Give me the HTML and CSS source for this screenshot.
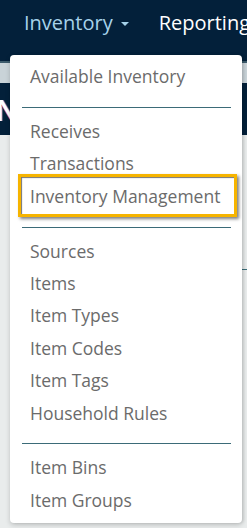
FILE: index.html
```html
<!DOCTYPE html>
<html>
<head>
<meta charset="utf-8">
<link rel="stylesheet" href="styles.css">
</head>
<body>
<header class="topnav">
  <div class="nav-item nav-active">Inventory <span class="caret"></span></div>
  <div class="nav-item">Reporting</div>
</header>
<div class="stripe"></div>
<div class="band"></div>
<div class="titlebar"><span class="logo-letter">N</span></div>
<main class="content">
  <div class="rule"></div>
</main>
<ul class="dropdown">
  <li class="dd-item">Available Inventory</li>
  <li class="dd-divider"></li>
  <li class="dd-item">Receives</li>
  <li class="dd-item">Transactions</li>
  <li class="dd-item highlighted">Inventory Management</li>
  <li class="dd-divider"></li>
  <li class="dd-item">Sources</li>
  <li class="dd-item">Items</li>
  <li class="dd-item">Item Types</li>
  <li class="dd-item">Item Codes</li>
  <li class="dd-item">Item Tags</li>
  <li class="dd-item">Household Rules</li>
  <li class="dd-divider"></li>
  <li class="dd-item">Item Bins</li>
  <li class="dd-item">Item Groups</li>
</ul>
</body>
</html>
```
FILE: styles.css
```css
html, body {
  margin: 0;
  padding: 0;
}
body {
  width: 247px;
  height: 528px;
  overflow: hidden;
  background: #e9ecec;
  font-family: "Open Sans", "Noto Sans", sans-serif;
  position: relative;
}
.topnav {
  height: 61px;
  background: #03203a;
  display: flex;
  align-items: center;
  gap: 30px;
  padding-left: 24px;
  white-space: nowrap;
  box-sizing: border-box;
}
.nav-item {
  font-size: 20px;
  color: #ffffff;
  line-height: 1;
  padding-bottom: 16px;
}
.nav-active {
  color: #a6d2ea;
  display: flex;
  align-items: center;
  gap: 8px;
}
.caret {
  width: 0;
  height: 0;
  border-top: 4px solid #a6d2ea;
  border-left: 4px solid transparent;
  border-right: 4px solid transparent;
  margin-top: 3px;
}
.stripe {
  height: 2px;
  background: #3d5c6c;
}
.band {
  height: 20px;
  background: #c9d3d8;
}
.titlebar {
  height: 52px;
  background: #03203a;
  display: flex;
  align-items: center;
}
.logo-letter {
  font-family: "Open Sans", sans-serif;
  font-weight: 600;
  font-size: 28px;
  color: #ffffff;
  margin-left: -4px;
  margin-top: 2px;
  text-shadow: -1px 0 0 #d23b3b, 1px 0 0 #3b6fd2;
}
.content {
  padding-top: 134px;
}
.rule {
  height: 1px;
  background: #3b6e7a;
  margin-left: 230px;
}
.dropdown {
  position: absolute;
  top: 55px;
  left: 10px;
  width: 232px;
  height: 468px;
  box-sizing: border-box;
  margin: 0;
  padding: 5px 0;
  list-style: none;
  background: #ffffff;
  border-radius: 4px;
  box-shadow: 0 2px 5px rgba(0, 0, 0, 0.18), 2px 0 3px rgba(0, 0, 0, 0.1);
}
.dd-item {
  height: 32.4px;
  line-height: 32.4px;
  padding-left: 20px;
  font-size: 17.5px;
  color: #6b6b6b;
  white-space: nowrap;
}
.dd-divider {
  height: 1px;
  background: #3b6b78;
  margin: 14.5px 11px 7px 12px;
}
.highlighted {
  position: relative;
}
.highlighted::after {
  content: "";
  position: absolute;
  top: -5.5px;
  bottom: -5px;
  left: 7.5px;
  right: 5.5px;
  border: 3px solid #f6b400;
  box-shadow: inset 1px 1px 1px rgba(0, 0, 0, 0.55), 2px 2px 3px rgba(0, 0, 0, 0.5);
}
```
